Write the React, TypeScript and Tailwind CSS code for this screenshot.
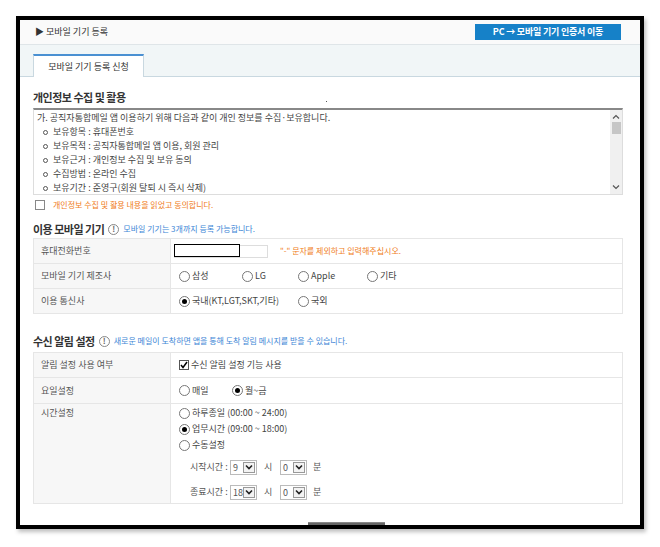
import React from 'react';

const font = "font-['Noto_Sans_CJK_KR','Noto_Sans',sans-serif]";

function Radio({ checked, label, className = '' }: { checked?: boolean; label: string; className?: string }) {
  return (
    <span className={`flex items-center ${className}`}>
      <span className="w-[11px] h-[11px] rounded-full border border-[#777] bg-white flex items-center justify-center mr-[2px]">
        {checked && <span className="w-[5px] h-[5px] rounded-full bg-black" />}
      </span>
      <span>{label}</span>
    </span>
  );
}

function Select({ value }: { value: string }) {
  return (
    <span className="flex items-center h-[15px] w-[27px] border border-[#bbb] bg-white">
      <span className="flex-1 pl-[2px] leading-none">{value}</span>
      <span className="w-[12px] h-[11px] mr-[1px] border border-[#999] bg-[#f3f3f3] flex items-center justify-center">
        <svg width="8" height="6" viewBox="0 0 8 6">
          <path d="M1 1.5 L4 4.5 L7 1.5" fill="none" stroke="#222" strokeWidth="1.6" />
        </svg>
      </span>
    </span>
  );
}

function Info() {
  return (
    <span className="mx-[4px] w-[11px] h-[11px] rounded-full border border-[#888] text-[#666] flex items-center justify-center text-[8px] font-bold leading-none">
      !
    </span>
  );
}

function Row({ label, children, h = 'h-[25px]' }: { label: string; children: React.ReactNode; h?: string }) {
  return (
    <div className={`flex border-b border-[#e6e6e6] ${h}`}>
      <div className="w-[137px] bg-[#f7f7f7] border-r border-[#e6e6e6] pl-[7px] text-[#555] flex items-center">
        {label}
      </div>
      <div className="flex-1 pl-[8px] flex items-center">{children}</div>
    </div>
  );
}

export default function App() {
  const items = [
    '보유항목 : 휴대폰번호',
    '보유목적 : 공직자통합메일 앱 이용, 회원 관리',
    '보유근거 : 개인정보 수집 및 보유 동의',
    '수집방법 : 온라인 수집',
    '보유기간 : 준영구(회원 탈퇴 시 즉시 삭제)',
  ];

  return (
    <div className={`w-[660px] h-[547px] bg-white pl-[16px] pt-[16px] overflow-hidden ${font} text-[9px] text-[#444]`}>
      <div className="w-[628px] h-[513px] border-4 border-black overflow-hidden bg-white shadow-[2px_3px_4px_rgba(0,0,0,0.25)]">
        {/* top bar */}
        <div className="h-[25px] bg-[#fafafa] border-b border-[#dfe5e8] flex items-center justify-between pl-[15px] pr-[19px]">
          <span className="text-[9px] text-[#333]">▶ 모바일 기기 등록</span>
          <span className="h-[16px] w-[146px] bg-[#1681c8] text-white text-[9px] font-bold flex items-center justify-center tracking-[-0.2px]">
            PC → 모바일 기기 인증서 이동
          </span>
        </div>

        {/* tabs */}
        <div className="h-[32px] bg-[#f1f6f7] border-b border-[#c9d8e0] pt-[9px] pl-[13px] flex">
          <div className="w-[111px] h-[23px] bg-white border-t-2 border-[#4a90d2] border-x border-x-[#c9d8e0] flex items-center justify-center text-[9px] text-[#333] -mb-px">
            모바일 기기 등록 신청
          </div>
        </div>

        <div className="pl-[13px] pr-[17px]">
          <div className="mt-[11px] h-[18px] flex items-center justify-between text-[11px] font-bold text-[#333] tracking-[-0.5px]">
            <span>개인정보 수집 및 활용</span>
            <span className="w-[1px] h-[1px] bg-[#555] mt-[8px] mr-[296px]" />
          </div>

          {/* terms box */}
          <div className="mt-[2px] h-[87px] border border-[#ddd] border-t-2 border-t-[#888] flex">
            <div className="flex-1 pl-[3px] pt-[1px] leading-[14px]">
              <div>가. 공직자통합메일 앱 이용하기 위해 다음과 같이 개인 정보를 수집·보유합니다.</div>
              {items.map((t) => (
                <div key={t} className="pl-[6px] flex items-center">
                  <span className="w-[5px] h-[5px] rounded-full border border-[#555] mr-[5px]" />
                  {t}
                </div>
              ))}
            </div>
            <div className="w-[12px] bg-[#f0f0f0] flex flex-col items-center pt-[4px] pb-[4px]">
              <svg width="8" height="6" viewBox="0 0 8 6">
                <path d="M1 4.5 L4 1.5 L7 4.5" fill="none" stroke="#555" strokeWidth="1.2" />
              </svg>
              <div className="w-[9px] h-[12px] bg-[#c6c6c6] mt-[2px]" />
              <div className="flex-1" />
              <svg width="8" height="6" viewBox="0 0 8 6">
                <path d="M1 1.5 L4 4.5 L7 1.5" fill="none" stroke="#555" strokeWidth="1.2" />
              </svg>
            </div>
          </div>

          <div className="mt-[4px] h-[12px] flex items-center pl-[2px]">
            <span className="w-[10px] h-[10px] border border-[#888] bg-white mr-[8px]" />
            <span className="text-[8px] text-[#f07d22]">개인정보 수집 및 활용 내용을 읽었고 동의합니다.</span>
          </div>

          {/* devices */}
          <div className="mt-[9px] h-[18px] flex items-center">
            <span className="text-[11px] font-bold text-[#333] tracking-[-0.5px]">이용 모바일 기기</span>
            <Info />
            <span className="text-[8px] text-[#3d86d6]">모바일 기기는 3개까지 등록 가능합니다.</span>
          </div>
          <div className="border border-[#e6e6e6] [&>div:last-child]:border-b-0">
            <Row label="휴대전화번호">
              <span className="relative w-[94px] h-[13px] border border-[#ddd] -ml-[5px]">
                <span className="absolute -left-px -top-[2px] w-[66px] h-[13px] border border-black bg-white" />
              </span>
              <span className="ml-[12px] text-[8px] text-[#f07d22]">"-" 문자를 제외하고 입력해주십시오.</span>
            </Row>
            <Row label="모바일 기기 제조사">
              <Radio label="삼성" className="w-[63px]" />
              <Radio label="LG" className="w-[56px]" />
              <Radio label="Apple" className="w-[69px]" />
              <Radio label="기타" />
            </Row>
            <Row label="이용 통신사" h="h-[24px]">
              <Radio checked label="국내(KT,LGT,SKT,기타)" className="w-[119px]" />
              <Radio label="국외" />
            </Row>
          </div>

          {/* notification */}
          <div className="mt-[18px] h-[18px] flex items-center">
            <span className="text-[11px] font-bold text-[#333] tracking-[-0.5px]">수신 알림 설정</span>
            <Info />
            <span className="text-[8px] text-[#3d86d6]">새로운 메일이 도착하면 앱을 통해 도착 알림 메시지를 받을 수 있습니다.</span>
          </div>
          <div className="mt-[2px] border border-[#e6e6e6]">
            <Row label="알림 설정 사용 여부">
              <span className="flex items-center">
                <span className="w-[10px] h-[10px] border border-[#555] bg-white flex items-center justify-center mr-[2px]">
                  <svg width="8" height="8" viewBox="0 0 8 8">
                    <path d="M1 4 L3 6.5 L7 1" fill="none" stroke="#000" strokeWidth="1.5" />
                  </svg>
                </span>
                수신 알림 설정 기능 사용
              </span>
            </Row>
            <Row label="요일설정" h="h-[26px]">
              <Radio label="매일" className="w-[53px]" />
              <Radio checked label="월~금" />
            </Row>
            <div className="flex h-[99px]">
              <div className="w-[137px] bg-[#f7f7f7] border-r border-[#e6e6e6] pl-[7px] pt-[2px] text-[#555]">시간설정</div>
              <div className="flex-1 pl-[8px] pt-[1px]">
                <div className="h-[16px] flex items-center">
                  <Radio label="하루종일 (00:00 ~ 24:00)" />
                </div>
                <div className="h-[16px] flex items-center">
                  <Radio checked label="업무시간 (09:00 ~ 18:00)" />
                </div>
                <div className="h-[16px] flex items-center">
                  <Radio label="수동설정" />
                </div>
                <div className="mt-[6px] h-[16px] flex items-center pl-[11px] text-[#555]">
                  <span className="w-[40px]">시작시간 :</span>
                  <Select value="9" />
                  <span className="ml-[7px] w-[16px]">시</span>
                  <Select value="0" />
                  <span className="ml-[6px]">분</span>
                </div>
                <div className="mt-[9px] h-[16px] flex items-center pl-[11px] text-[#555]">
                  <span className="w-[40px]">종료시간 :</span>
                  <Select value="18" />
                  <span className="ml-[7px] w-[16px]">시</span>
                  <Select value="0" />
                  <span className="ml-[6px]">분</span>
                </div>
              </div>
            </div>
          </div>

          <div className="mt-[18px] flex justify-center pl-[36px]">
            <div className="w-[77px] h-[20px] bg-[#666] border-t border-[#888]" />
          </div>
        </div>
      </div>
    </div>
  );
}
